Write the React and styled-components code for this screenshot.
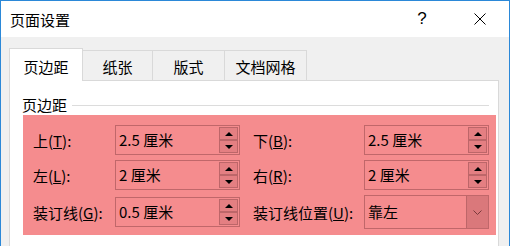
import React from 'react';
import styled, { createGlobalStyle } from 'styled-components';

const GlobalStyle = createGlobalStyle`
  html, body {
    margin: 0;
    padding: 0;
    background: #ffffff;
  }
  body {
    font-family: "Noto Sans CJK SC", "Microsoft YaHei", sans-serif;
    font-size: 15px;
    color: #000;
  }
`;

const Window = styled.div`
  width: 510px;
  height: 246px;
  box-sizing: border-box;
  border: 1px solid #2b88d8;
  border-bottom: none;
  overflow: hidden;
  display: flex;
  flex-direction: column;
`;

const TitleBar = styled.div`
  height: 36px;
  flex-shrink: 0;
  display: flex;
  align-items: center;
  padding-left: 9px;
  background: #fff;
`;

const Title = styled.div`
  flex: 1;
  line-height: 20px;
  padding-top: 1px;
`;

const TitleButton = styled.div`
  width: 58px;
  height: 36px;
  display: flex;
  align-items: center;
  justify-content: center;
  font-family: "Liberation Sans", sans-serif;
  font-size: 17px;
`;

const Body = styled.div`
  flex: 1;
  display: flex;
  flex-direction: column;
  background: #f0f0f0;
  padding: 11px 10px 0 8px;
`;

const TabRow = styled.div`
  display: flex;
  align-items: flex-end;
  height: 32px;
`;

const Tab = styled.div`
  position: relative;
  box-sizing: border-box;
  width: ${p => p.$width}px;
  height: ${p => (p.$active ? 33 : 30)}px;
  margin-bottom: ${p => (p.$active ? -1 : 0)}px;
  margin-left: ${p => (p.$first ? 0 : -1)}px;
  z-index: ${p => (p.$active ? 1 : 0)};
  border: 1px solid #d9d9d9;
  border-bottom: none;
  background: ${p => (p.$active ? '#fff' : '#f0f0f0')};
  display: flex;
  justify-content: center;
  align-items: center;
  padding-top: ${p => (p.$active ? 4 : 2)}px;
  line-height: 20px;
`;

const Panel = styled.div`
  flex: 1;
  background: #fff;
  border: 1px solid #d9d9d9;
  border-bottom: none;
  display: flex;
  flex-direction: column;
`;

const SectionHeader = styled.div`
  display: flex;
  align-items: center;
  height: 20px;
  margin: 14px 9px 0 12px;
  line-height: 20px;
  gap: 5px;

  &::after {
    content: '';
    flex: 1;
    height: 1px;
    background: #dcdcdc;
  }
`;

const SectionLabel = styled.div`
  margin: 8px 0 0 12px;
  line-height: 20px;
`;

const Highlight = styled.div`
  width: 473px;
  margin-left: 13px;
  box-sizing: border-box;
  padding: 10px 6px 6px 10px;
  background: #f58c8e;
  display: grid;
  grid-template-columns: 82px 125px 124px 125px;
  grid-template-rows: 30px 30px 34px;
  row-gap: 5px;
  align-items: center;
`;

const Label = styled.div`
  padding-left: ${p => (p.$indent ? 13 : 0)}px;
  line-height: 20px;
  padding-top: 2px;
  white-space: nowrap;
`;

const Field = styled.div`
  box-sizing: border-box;
  height: ${p => p.$height || 30}px;
  border: 1px solid #c0676a;
  display: flex;
  align-items: stretch;
`;

const FieldText = styled.div`
  flex: 1;
  display: flex;
  align-items: center;
  padding-left: 3px;
  line-height: 20px;
`;

const SpinGroup = styled.div`
  width: 19px;
  margin: 1px 1px 1px 0;
  display: flex;
  flex-direction: column;
`;

const SpinButton = styled.div`
  flex: 1;
  box-sizing: border-box;
  border: 1px solid #bd6669;
  background: #e47f82;
  display: flex;
  align-items: center;
  justify-content: center;

  &::before {
    content: '';
    width: 0;
    height: 0;
    border-left: 4px solid transparent;
    border-right: 4px solid transparent;
    ${p => (p.$down ? 'border-top: 4px solid #000;' : 'border-bottom: 4px solid #000;')}
  }
`;

const DropButton = styled.div`
  width: 21px;
  border-left: 1px solid #bd6669;
  background: #da787b;
  display: flex;
  align-items: center;
  justify-content: center;
`;

const SpinField = ({ value }) => (
  <Field>
    <FieldText>{value}</FieldText>
    <SpinGroup>
      <SpinButton />
      <SpinButton $down />
    </SpinGroup>
  </Field>
);

const Key = ({ k }) => (
  <>
    (<u>{k}</u>):
  </>
);

export default function App() {
  return (
    <>
      <GlobalStyle />
      <Window>
        <TitleBar>
          <Title>页面设置</Title>
          <TitleButton>?</TitleButton>
          <TitleButton>
            <svg width="12" height="12" viewBox="0 0 12 12">
              <path d="M0.5 0.5 L11.5 11.5 M11.5 0.5 L0.5 11.5" stroke="#000" strokeWidth="1" fill="none" />
            </svg>
          </TitleButton>
        </TitleBar>
        <Body>
          <TabRow>
            <Tab $active $first $width={74}>页边距</Tab>
            <Tab $width={71}>纸张</Tab>
            <Tab $width={73}>版式</Tab>
            <Tab $width={83}>文档网格</Tab>
          </TabRow>
          <Panel>
            <SectionHeader>页边距</SectionHeader>
            <Highlight>
              <Label>上<Key k="T" /></Label>
              <SpinField value="2.5 厘米" />
              <Label $indent>下<Key k="B" /></Label>
              <SpinField value="2.5 厘米" />

              <Label>左<Key k="L" /></Label>
              <SpinField value="2 厘米" />
              <Label $indent>右<Key k="R" /></Label>
              <SpinField value="2 厘米" />

              <Label>装订线<Key k="G" /></Label>
              <SpinField value="0.5 厘米" />
              <Label $indent>装订线位置<Key k="U" /></Label>
              <Field $height={34}>
                <FieldText>靠左</FieldText>
                <DropButton>
                  <svg width="9" height="5" viewBox="0 0 9 5">
                    <polyline points="0.5,0.5 4.5,4.5 8.5,0.5" stroke="#7a3a3c" strokeWidth="1" fill="none" />
                  </svg>
                </DropButton>
              </Field>
            </Highlight>
            <SectionLabel>纸张方向</SectionLabel>
          </Panel>
        </Body>
      </Window>
    </>
  );
}
